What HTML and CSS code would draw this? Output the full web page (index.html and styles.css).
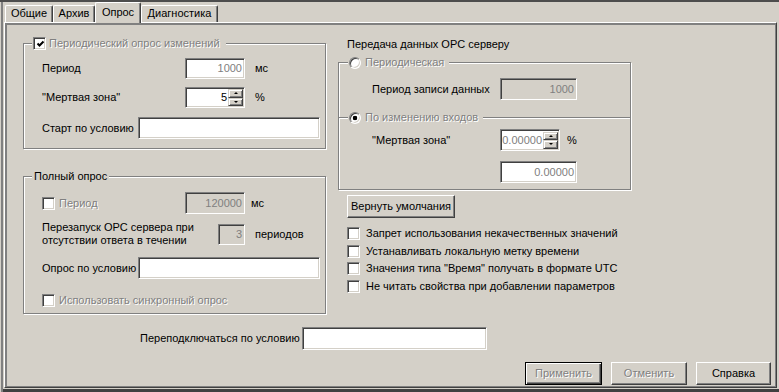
FILE: index.html
```html
<!DOCTYPE html>
<html lang="ru">
<head>
<meta charset="utf-8">
<title>Опрос</title>
<link rel="stylesheet" href="styles.css">
</head>
<body>
<div class="window">
  <div class="tabs">
    <div class="tab t1">Общие</div>
    <div class="tab t2">Архив</div>
    <div class="tab t3 active">Опрос</div>
    <div class="tab t4">Диагностика</div>
  </div>
  <div class="panel">
    <div class="main">
      <div class="col-left">
        <div class="group g1">
          <div class="legend">
            <span class="chk"><svg width="9" height="9" viewBox="0 0 9 9"><path d="M1.5 3.5 L3.5 5.5 L7.5 1.5" stroke="#000" stroke-width="2" fill="none"/></svg></span>
            <span class="dis">Периодический опрос изменений</span>
          </div>
          <div class="row h21">
            <span class="lbl w143">Период</span>
            <span class="edit w60 white"><span class="gray">1000</span></span>
            <span class="unit">мс</span>
          </div>
          <div class="row h21 mt8">
            <span class="lbl w143">"Мертвая зона"</span>
            <span class="edit w60 white spin"><span class="val">5</span><span class="spinbtns"><span class="sb"><span class="tri up"></span></span><span class="sb"><span class="tri down"></span></span></span></span>
            <span class="unit">%</span>
          </div>
          <div class="row h22 mt9">
            <span class="lbl w96">Старт по условию</span>
            <span class="edit w182 white"></span>
          </div>
        </div>
        <div class="group g2">
          <div class="legend"><span>Полный опрос</span></div>
          <div class="row h22">
            <span class="lbl w143 chkrow"><span class="chk"></span><span class="dis">Период</span></span>
            <span class="edit w60"><span class="gray">120000</span></span>
            <span class="unit u2">мс</span>
          </div>
          <div class="row h28 mt6">
            <span class="lbl w176">Перезапуск OPC сервера при<br>отсутствии ответа в течении</span>
            <span class="edit w27 eh21"><span class="gray">3</span></span>
            <span class="unit">периодов</span>
          </div>
          <div class="row h22 mt9">
            <span class="lbl w96">Опрос по условию</span>
            <span class="edit w182 white"></span>
          </div>
          <div class="row h13 mt15">
            <span class="chkrow"><span class="chk"></span><span class="dis">Использовать синхронный опрос</span></span>
          </div>
        </div>
      </div>
      <div class="col-right">
        <div class="title">Передача данных OPC серверу</div>
        <div class="frame">
          <div class="legend rleg">
            <span class="radio"></span><span class="dis">Периодическая</span>
          </div>
          <div class="row h22 mt15 rpad">
            <span class="lbl w128">Период записи данных</span>
            <span class="edit w77"><span class="gray">1000</span></span>
          </div>
          <div class="divider">
            <span class="line ls"></span>
            <span class="rlabel"><span class="radio on"></span><span class="dis">По изменению входов</span></span>
            <span class="line lf"></span>
          </div>
          <div class="row h22 mt5 rpad">
            <span class="lbl w128">"Мертвая зона"</span>
            <span class="edit w60 white spin"><span class="val gray">0.00000</span><span class="spinbtns"><span class="sb"><span class="tri up"></span></span><span class="sb"><span class="tri down"></span></span></span></span>
            <span class="unit u3">%</span>
          </div>
          <div class="row h22 mt10 vpad">
            <span class="edit w77 white"><span class="gray">0.00000</span></span>
          </div>
        </div>
        <div class="btn defaults">Вернуть умолчания</div>
        <div class="checks">
          <div class="crow"><span class="chk"></span><span>Запрет использования некачественных значений</span></div>
          <div class="crow g4"><span class="chk"></span><span>Устанавливать локальную метку времени</span></div>
          <div class="crow g5"><span class="chk"></span><span>Значения типа "Время" получать в формате UTC</span></div>
          <div class="crow g4b"><span class="chk"></span><span>Не читать свойства при добавлении параметров</span></div>
        </div>
      </div>
    </div>
    <div class="reconnect">
      <span class="lbl w162">Переподключаться по условию</span>
      <span class="edit w185 white"></span>
    </div>
    <div class="buttons">
      <div class="btn default b1"><span class="dis">Применить</span></div>
      <div class="btn b2"><span class="dis">Отменить</span></div>
      <div class="btn b3">Справка</div>
    </div>
  </div>
</div>
</body>
</html>
```
FILE: styles.css
```css
* { box-sizing: border-box; }
html, body { margin: 0; padding: 0; }
body {
  background: #d4d0c8;
  font-family: "Liberation Sans", Arial, sans-serif;
  font-size: 11px;
  line-height: 13px;
  color: #000;
}
.window {
  width: 779px;
  height: 392px;
  border-top: 2px solid #4d4d4d;
  padding: 0 2px 0 4px;
  box-shadow: inset 1px 0 0 #d4d0c8, inset 3px 0 0 #808080, inset 0 -3px 0 #404040;
  overflow: hidden;
}
/* tabs */
.tabs {
  display: flex;
  align-items: flex-end;
  height: 20px;
  padding-left: 1px;
  position: relative;
  z-index: 2;
}
.tab {
  height: 17px;
  border: 1px solid #fff;
  border-right-color: #404040;
  border-bottom: 0;
  box-shadow: inset -1px 0 0 #808080;
  border-radius: 2px 2px 0 0;
  text-align: center;
  padding-top: 1px;
  background: #d4d0c8;
}
.t1 { width: 48px; }
.t2 { width: 42px; }
.t3 { width: 46px; }
.t4 { width: 77px; }
.tab.active {
  height: 21px;
  margin-bottom: -1px;
  padding-top: 3px;
}
/* panel */
.panel {
  width: 773px;
  height: 366px;
  border: 1px solid;
  border-color: #fff #404040 #404040 #fff;
  box-shadow: inset 2px 2px 0 #808080, inset -1px -1px 0 #808080;
  padding: 0 5px 0 18px;
  display: flex;
  flex-direction: column;
}
.main { display: flex; height: 291px; }
.col-left { width: 303px; }
.col-right { width: 293px; margin-left: 12px; }

.group {
  position: relative;
  border: 1px solid #808080;
  box-shadow: inset 1px 1px 0 #fff, 1px 1px 0 #fff;
  padding-left: 18px;
}
.g1 { margin-top: 20px; height: 106px; padding-top: 14px; }
.g2 { margin-top: 27px; height: 138px; padding-top: 15px; }
.legend {
  position: absolute;
  top: -7px;
  left: 8px;
  height: 13px;
  display: flex;
  align-items: center;
  gap: 3px;
  padding: 0 6px 0 1px;
  background: #d4d0c8;
}
.g2 .legend { padding: 0 2px 0 2px; }

.row { display: flex; align-items: center; }
.h13 { height: 13px; }
.h21 { height: 21px; }
.h22 { height: 22px; }
.h28 { height: 28px; }
.mt5 { margin-top: 5px; }
.mt6 { margin-top: 6px; }
.mt8 { margin-top: 8px; }
.mt9 { margin-top: 9px; }
.mt10 { margin-top: 10px; }
.mt15 { margin-top: 15px; }

.lbl { flex: none; white-space: nowrap; }
.w96 { width: 96px; }
.w128 { width: 128px; }
.w143 { width: 143px; }
.w162 { width: 162px; }
.w176 { width: 176px; }

.edit {
  flex: none;
  height: 100%;
  display: flex;
  align-items: center;
  justify-content: flex-end;
  border: 1px solid;
  border-color: #808080 #fff #fff #808080;
  box-shadow: inset 1px 1px 0 #404040, inset -1px -1px 0 #d4d0c8;
  padding-right: 2px;
  background: #d4d0c8;
}
.edit.white { background: #fff; }
.eh21 { height: 21px; }
.w27 { width: 27px; }
.w60 { width: 60px; }
.w77 { width: 77px; }
.w182 { width: 182px; }
.w185 { width: 185px; }
.gray { color: #808080; }
.dis { color: #808080; text-shadow: 1px 1px 0 #fff; }

.spin { padding-right: 1px; }
.spin .val { margin-right: 1px; }
.spinbtns {
  display: flex;
  flex-direction: column;
  width: 15px;
  height: 17px;
}
.sb {
  flex: 1;
  display: flex;
  align-items: center;
  justify-content: center;
  background: #d4d0c8;
  border: 1px solid;
  border-color: #d4d0c8 #404040 #404040 #d4d0c8;
  box-shadow: inset 1px 1px 0 #fff, inset -1px -1px 0 #808080;
}
.tri { width: 0; height: 0; border-left: 2px solid transparent; border-right: 2px solid transparent; }
.tri.up { border-bottom: 2px solid #000; }
.tri.down { border-top: 2px solid #000; }

.unit { margin-left: 10px; }
.u2 { margin-left: 6px; }
.u3 { margin-left: 7px; }

.chk {
  flex: none;
  width: 13px;
  height: 13px;
  border: 1px solid;
  border-color: #808080 #fff #fff #808080;
  box-shadow: inset 1px 1px 0 #404040, inset -1px -1px 0 #d4d0c8;
  background: #fff;
  display: flex;
  align-items: center;
  justify-content: center;
  padding: 1px 0 0 1px;
}
.chkrow { display: flex; align-items: center; gap: 4px; }

.radio {
  flex: none;
  width: 12px;
  height: 12px;
  border-radius: 50%;
  border: 1px solid;
  border-color: #808080 #fff #fff #808080;
  box-shadow: inset 1px 1px 0 #404040, inset -1px -1px 0 #d4d0c8;
  background: #fff;
}
.radio.on { background: radial-gradient(circle at center, #000 0 2px, #fff 2.6px); }

/* right column */
.title { margin-top: 15px; padding-left: 9px; height: 13px; }
.frame {
  position: relative;
  margin-top: 11px;
  height: 128px;
  border: 1px solid #808080;
  box-shadow: inset 1px 1px 0 #fff, 1px 1px 0 #fff;
}
.rleg { left: 9px; gap: 4px; padding: 0 5px 0 1px; }
.rpad { padding-left: 33px; }
.vpad { padding-left: 161px; }
.divider { display: flex; align-items: center; height: 13px; margin-top: 11px; }
.line { height: 2px; border-top: 1px solid #808080; border-bottom: 1px solid #fff; }
.ls { width: 9px; }
.lf { flex: 1; }
.rlabel { display: flex; align-items: center; gap: 4px; padding: 0 5px 0 1px; }

.btn {
  height: 23px;
  display: flex;
  align-items: center;
  justify-content: center;
  border: 1px solid;
  border-color: #fff #404040 #404040 #fff;
  box-shadow: inset -1px -1px 0 #808080;
  white-space: nowrap;
}
.defaults { width: 108px; margin: 5px 0 0 9px; }
.checks { margin-top: 9px; padding-left: 9px; }
.crow { display: flex; align-items: center; gap: 6px; height: 13px; }
.g4 { margin-top: 5px; }
.g5 { margin-top: 4px; }
.g4b { margin-top: 5px; }

.reconnect {
  display: flex;
  align-items: center;
  height: 23px;
  margin-top: 13px;
  padding-left: 117px;
}
.buttons {
  display: flex;
  justify-content: flex-end;
  margin-top: 12px;
}
.btn.default {
  border-color: #000;
  box-shadow: inset 1px 1px 0 #fff, inset -1px -1px 0 #404040, inset -2px -2px 0 #808080;
}
.b1 { width: 77px; margin-right: 9px; }
.b2 { width: 76px; margin-right: 9px; }
.b3 { width: 75px; }
```
